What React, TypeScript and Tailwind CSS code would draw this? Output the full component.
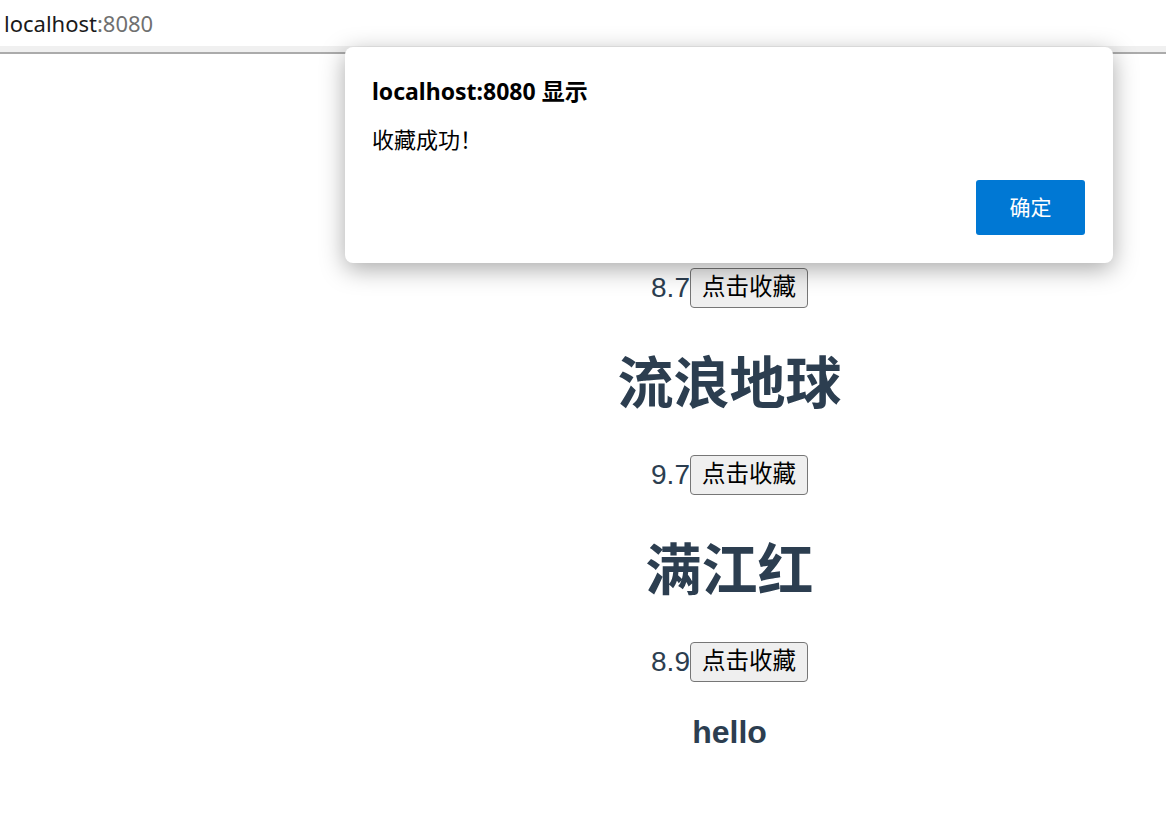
import React from "react";

const pageFont = { fontFamily: '"Liberation Sans", Arial, "Noto Sans CJK SC", sans-serif' };
const uiFont = { fontFamily: '"Noto Sans", "Noto Sans CJK SC", sans-serif' };

function Row({ score }: { score: string }) {
  return (
    <div className="flex h-[40px] items-center justify-center">
      <span className="text-[28px] leading-none text-[#2c3e50]">{score}</span>
      <button
        className="h-[40px] rounded-[4px] border-[1.5px] border-[#767676] bg-[#efefef] px-[11px] text-[23.5px] leading-none text-black"
        style={pageFont}
      >
        点击收藏
      </button>
    </div>
  );
}

function Title({ text }: { text: string }) {
  return (
    <h1 className="mt-[44px] mb-[39px] h-[64px] text-[56px] font-bold leading-[64px] text-[#2c3e50]">
      {text}
    </h1>
  );
}

export default function App() {
  return (
    <div className="relative h-[820px] w-[1166px] overflow-hidden bg-white">
      <div className="flex h-[46px] items-center pl-[4px] text-[22px]" style={uiFont}>
        <span className="text-[#1a1a1a]">localhost</span>
        <span className="text-[#707070]">:8080</span>
      </div>
      <div className="h-[6px] bg-[#f0f0f0]" />
      <div className="h-[2px] bg-[#ababab]" />

      <div className="pl-[293px] pt-[214px] text-center" style={pageFont}>
        <Row score="8.7" />
        <Title text="流浪地球" />
        <Row score="9.7" />
        <Title text="满江红" />
        <Row score="8.9" />
        <h3 className="mt-[31px] text-[32px] font-bold leading-[38px] text-[#2c3e50]">hello</h3>
      </div>

      <div
        className="absolute left-[345px] top-[47px] flex h-[216px] w-[768px] flex-col rounded-[8px] bg-white pl-[27px] pr-[28px] shadow-[0_6px_24px_rgba(0,0,0,0.34)]"
        style={uiFont}
      >
        <div className="mt-[29px] h-[30px] text-[23px] font-bold leading-[30px] text-black">
          localhost:8080 显示
        </div>
        <div className="mt-[18px] h-[30px] text-[22px] leading-[30px] text-black">收藏成功！</div>
        <div className="mt-[26px] flex justify-end">
          <button className="h-[55px] w-[109px] rounded-[3px] bg-[#0078d4] text-[21px] text-white">
            确定
          </button>
        </div>
      </div>
    </div>
  );
}
